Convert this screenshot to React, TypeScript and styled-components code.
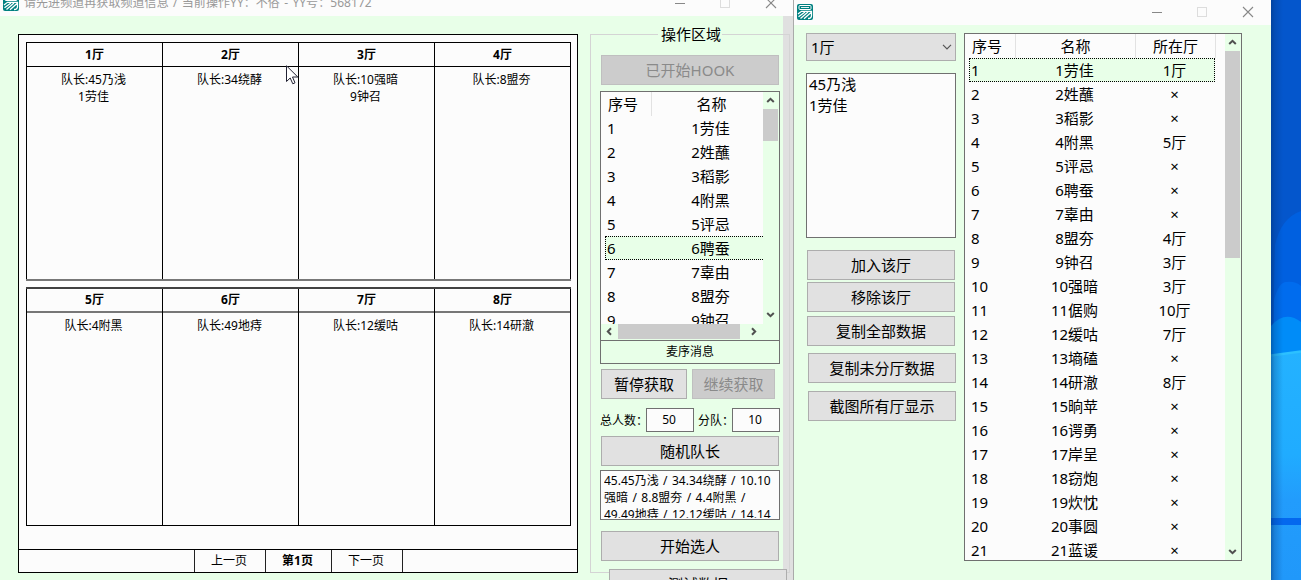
import React from 'react';
import styled, { createGlobalStyle, css } from 'styled-components';

const MINT = '#e8ffe8';
const PAPER = '#fcfcfc';

const GlobalStyle = createGlobalStyle`
  * { box-sizing: border-box; }
  body {
    margin: 0;
    overflow: hidden;
    font-family: "Noto Sans", "Noto Sans CJK SC", sans-serif;
    font-size: 15px;
    color: #000;
  }
  button, select, input { font: inherit; }
`;

const Desktop = styled.div`
  position: relative;
  display: flex;
  width: 1301px;
  height: 580px;
  overflow: hidden;
`;

const MainWindow = styled.section`
  display: flex;
  flex-direction: column;
  width: 793px;
  height: 580px;
  overflow: hidden;
  background: ${MINT};
`;

const SideWindow = styled.section`
  display: flex;
  flex-direction: column;
  width: 478px;
  height: 580px;
  background: ${MINT};
  border-left: 1px solid #aaa;
`;

const TitleBar = styled.header<{ $h: number; $shift: number; $pad: string }>`
  display: flex;
  flex: none;
  align-items: center;
  height: ${p => p.$h}px;
  padding: ${p => p.$pad};
  background: ${PAPER};
  & > * { margin-top: ${p => p.$shift}px; flex: none; }
`;

const TitleText = styled.span`
  flex: 1 0 auto;
  padding-left: 5px;
  font-size: 12px;
  line-height: 16px;
  letter-spacing: 0.06px;
  word-spacing: 1.1px;
  color: #999;
  white-space: nowrap;
`;

const Spacer = styled.span`
  flex: 1 1 auto !important;
`;

const MainBody = styled.div`
  display: flex;
  flex: 1;
  padding: 18px 0 0 18px;
  background: linear-gradient(to right, transparent 783px, #e0e0e0 783px);
`;

const Board = styled.div`
  display: flex;
  flex-direction: column;
  width: 560px;
  height: 539px;
  border: 1px solid #000;
  background: ${PAPER};
`;

const HallGroup = styled.div<{ $lower?: boolean }>`
  display: grid;
  grid-template-columns: 137px 136px 136px 136px;
  width: 545px;
  height: 239px;
  margin: ${p => (p.$lower ? 6 : 7)}px 0 0 7px;
  border-top: ${p => (p.$lower ? '2px solid #404040' : '1px solid #000')};
  border-bottom: ${p => (p.$lower ? '1px solid #000' : '2px solid #777')};
`;

const Hall = styled.div`
  border-right: 1px solid #000;
  text-align: center;
  font-size: 12px;
  line-height: 17px;
  &:first-child { border-left: 1px solid #000; }
`;

const HallName = styled.div<{ $lower?: boolean }>`
  height: 24px;
  line-height: ${p => (p.$lower ? 22 : 23)}px;
  margin-bottom: 4px;
  font-weight: 700;
  border-bottom: ${p => (p.$lower ? '2px solid #777' : '1px solid #000')};
`;

const Member = styled.div`
  padding-right: 2px;
`;

const Pager = styled.div`
  display: flex;
  height: 24px;
  margin-top: auto;
  margin-bottom: -1px;
  padding-left: 175px;
  padding-bottom: 1px;
  border-top: 1px solid #000;
  font-size: 12px;
  line-height: 22px;
  text-align: center;
`;

const PageCell = styled.div<{ $w: number; $bold?: boolean }>`
  width: ${p => p.$w}px;
  padding-right: 2px;
  border-left: 1px solid #222;
  font-weight: ${p => (p.$bold ? 700 : 400)};
  &:last-child { border-right: 1px solid #222; }
`;

const ControlGroup = styled.fieldset`
  display: flex;
  flex-direction: column;
  width: 200px;
  height: 539px;
  margin: 0 0 0 12px;
  padding: 0 0 0 9px;
  border: 1px solid #d4d4d4;
  min-width: 0;
`;

const Legend = styled.div`
  align-self: flex-start;
  width: 64px;
  height: 20px;
  margin: -11px 0 10px 58px;
  padding-left: 3px;
  line-height: 20px;
  white-space: nowrap;
  background: ${MINT};
`;

const Button = styled.button<{ $w: number; $top?: number; $left?: number }>`
  flex: none;
  width: ${p => p.$w}px;
  height: 30px;
  margin: ${p => p.$top ?? 0}px 0 0 ${p => p.$left ?? 0}px;
  padding: 0;
  border: 1px solid #adadad;
  background: #e1e1e1;
  color: #000;
  line-height: 28px;
  &:disabled {
    border-color: #bfbfbf;
    background: #ccc;
    color: #8a8a8a;
  }
`;

const ListFrame = styled.div<{ $w: number; $h: number; $top?: number }>`
  flex: none;
  display: flex;
  flex-direction: column;
  width: ${p => p.$w}px;
  height: ${p => p.$h}px;
  margin-top: ${p => p.$top ?? 0}px;
  border: 1px solid #707070;
  background: ${MINT};
`;

const ListArea = styled.div<{ $h: number }>`
  display: flex;
  height: ${p => p.$h}px;
  overflow: hidden;
`;

const Rows = styled.div`
  flex: 1;
  overflow: hidden;
  background: ${PAPER};
`;

const rowGrid = css<{ $cols: string }>`
  display: grid;
  grid-template-columns: ${p => p.$cols};
  height: 24px;
  line-height: 24px;
  white-space: nowrap;
`;

const HeaderRow = styled.div<{ $cols: string }>`
  ${rowGrid}
  & > span { border-right: 1px solid #e2e2e2; text-align: center; }
  & > span:first-child { text-align: left; padding-left: 7px; }
`;

const Row = styled.div<{ $cols: string; $selected?: boolean; $open?: boolean }>`
  ${rowGrid}
  position: relative;
  & > span { text-align: center; padding-right: 3px; }
  & > span:first-child { text-align: left; padding-left: 6px; }
  ${p => p.$selected && css`
    &::before {
      content: '';
      position: absolute;
      inset: 0 ${p.$open ? 0 : 10}px 0 4px;
      border: 1px dotted #000;
      ${p.$open && 'border-right: 0;'}
      background: ${MINT};
    }
    & > span { position: relative; }
  `}
`;

const ScrollY = styled.div`
  display: flex;
  flex-direction: column;
  align-items: center;
  width: 15px;
  margin-right: 1px;
  background: ${MINT};
`;

const ScrollX = styled.div`
  display: flex;
  align-items: flex-start;
  height: 16px;
`;

const ThumbY = styled.div<{ $h: number }>`
  width: 15px;
  height: ${p => p.$h}px;
  margin-bottom: auto;
  background: #cbcbcb;
`;

const ThumbX = styled.div`
  width: 122px;
  height: 15px;
  background: #cbcbcb;
`;

const ArrowBox = styled.span<{ $w: number; $h: number }>`
  display: flex;
  align-items: center;
  justify-content: center;
  width: ${p => p.$w}px;
  height: ${p => p.$h}px;
`;

const Caption = styled.div`
  flex: 1;
  border-top: 1px solid #707070;
  font-size: 12px;
  line-height: 22px;
  text-align: center;
`;

const Line = styled.div<{ $top: number; $gap?: number }>`
  display: flex;
  align-items: center;
  flex: none;
  margin-top: ${p => p.$top}px;
  gap: ${p => p.$gap ?? 0}px;
`;

const Label = styled.label<{ $w: number }>`
  width: ${p => p.$w}px;
  font-size: 12px;
  white-space: nowrap;
`;

const NumberBox = styled.div<{ $w: number; $right?: number }>`
  width: ${p => p.$w}px;
  height: 24px;
  margin-right: ${p => p.$right ?? 0}px;
  padding-right: 2px;
  border: 1px solid #707070;
  background: ${PAPER};
  font-size: 12px;
  line-height: 22px;
  text-align: center;
`;

const CaptainBox = styled.div`
  flex: none;
  width: 180px;
  height: 50px;
  margin-top: 4px;
  padding: 1px 3px;
  border: 1px solid #707070;
  background: ${PAPER};
  font-size: 12px;
  line-height: 17px;
  word-spacing: 1.3px;
  white-space: pre;
`;

const CaptainText = styled.div`
  height: 46px;
  overflow: hidden;
`;

const SideBody = styled.div`
  display: flex;
  gap: 8px;
  padding: 8px 0 0 12px;
`;

const SideColumn = styled.div`
  display: flex;
  flex-direction: column;
  width: 150px;
`;

const Combo = styled.div`
  display: flex;
  align-items: center;
  justify-content: space-between;
  height: 28px;
  padding: 0 3px 1px 4px;
  border: 1px solid #adadad;
  background: #e1e1e1;
`;

const MemberBox = styled.div`
  height: 165px;
  margin: 12px 0;
  padding: 0 2px;
  border: 1px solid #707070;
  background: ${PAPER};
  line-height: 21px;
`;

const Wallpaper = styled.svg`
  display: block;
  width: 30px;
  height: 580px;
`;

const Pointer = styled.svg`
  position: absolute;
  left: 286px;
  top: 65px;
`;

const Chevron = ({ dir }: { dir: 'up' | 'down' | 'left' | 'right' }) => {
  const turn = { up: 0, right: 90, down: 180, left: 270 }[dir];
  return (
    <svg width="9" height="9" viewBox="0 0 9 9">
      <path d="M1.2 6 L4.5 2.8 L7.8 6" fill="none" stroke="#505050" strokeWidth="2" transform={`rotate(${turn} 4.5 4.5)`} />
    </svg>
  );
};

const Logo = () => (
  <svg width="16" height="16" viewBox="0 0 16 16">
    <rect width="16" height="16" rx="2" fill="#008080" />
    <rect x="2" y="1.500" width="12" height="4" rx="1" fill="none" stroke="#fff" />
    <path d="M4 3.500H12" stroke="#fff" strokeWidth=".9" />
    <path d="M1 10L4.500 7.300H14.500V11.500Q14.500 14.500 11 14.500M8 8L1.500 12.800M11 8L3.500 14.500M14 8.500L7 14.800" fill="none" stroke="#fff" strokeWidth="1.3" />
  </svg>
);

const Controls = () => (
  <svg width="102" height="12" viewBox="0 0 102 12" fill="none">
    <path d="M0 6.5H10" stroke="#888" />
    <rect x="45.5" y="1.5" width="9" height="9" stroke="#ddd" />
    <path d="M91 1L101 11M101 1L91 11" stroke="#888" strokeWidth="1.1" />
  </svg>
);

const halls = [
  [['1厅', '队长:45乃浅', '1劳佳'], ['2厅', '队长:34绕酵'], ['3厅', '队长:10强暗', '9钟召'], ['4厅', '队长:8盟夯']],
  [['5厅', '队长:4附黑'], ['6厅', '队长:49地痔'], ['7厅', '队长:12缓咕'], ['8厅', '队长:14研澈']],
];

const people: [string, string][] = [
  ['劳佳', '1厅'], ['姓蘸', '×'], ['稻影', '×'], ['附黑', '5厅'], ['评忌', '×'], ['聘蚕', '×'], ['辜由', '×'],
  ['盟夯', '4厅'], ['钟召', '3厅'], ['强暗', '3厅'], ['倨购', '10厅'], ['缓咕', '7厅'], ['墒磕', '×'], ['研澈', '8厅'],
  ['晌苹', '×'], ['谔勇', '×'], ['岸呈', '×'], ['窃炮', '×'], ['炊忱', '×'], ['事圆', '×'], ['蓝谖', '×'],
];

const SMALL = '51px 120px';
const WIDE = '51px 120px 80px 10px';

export default function App() {
  return (
    <>
      <GlobalStyle />
      <Desktop>
        <MainWindow>
          <TitleBar $h={16} $shift={-10} $pad="0 16px 0 3px">
            <Logo />
            <TitleText>请先进频道再获取频道信息 / 当前操作YY：不俗 - YY号：568172</TitleText>
            <Controls />
          </TitleBar>
          <MainBody>
            <Board>
              {halls.map((group, g) => (
                <HallGroup key={g} $lower={g === 1}>
                  {group.map(([name, ...members]) => (
                    <Hall key={name}>
                      <HallName $lower={g === 1}>{name}</HallName>
                      {members.map(m => <Member key={m}>{m}</Member>)}
                    </Hall>
                  ))}
                </HallGroup>
              ))}
              <Pager>
                <PageCell $w={71}>上一页</PageCell>
                <PageCell $w={66} $bold>第1页</PageCell>
                <PageCell $w={72}>下一页</PageCell>
              </Pager>
            </Board>
            <ControlGroup>
              <Legend>操作区域</Legend>
              <Button $w={178} $left={1} $top={1} disabled>已开始HOOK</Button>
              <ListFrame $w={180} $h={273} $top={6}>
                <ListArea $h={232}>
                  <Rows>
                    <HeaderRow $cols={SMALL}><span>序号</span><span>名称</span></HeaderRow>
                    {people.slice(0, 9).map(([name], i) => (
                      <Row key={name} $cols={SMALL} $selected={i === 5} $open>
                        <span>{i + 1}</span><span>{i + 1}{name}</span>
                      </Row>
                    ))}
                  </Rows>
                  <ScrollY>
                    <ArrowBox $w={15} $h={17}><Chevron dir="up" /></ArrowBox>
                    <ThumbY $h={32} />
                    <ArrowBox $w={15} $h={19}><Chevron dir="down" /></ArrowBox>
                  </ScrollY>
                </ListArea>
                <ScrollX>
                  <ArrowBox $w={17} $h={15}><Chevron dir="left" /></ArrowBox>
                  <ThumbX />
                  <ArrowBox $w={27} $h={15}><Chevron dir="right" /></ArrowBox>
                </ScrollX>
                <Caption>麦序消息</Caption>
              </ListFrame>
              <Line $top={5} $gap={5}>
                <Button $w={86} $left={1}>暂停获取</Button>
                <Button $w={83} disabled>继续获取</Button>
              </Line>
              <Line $top={9}>
                <Label $w={46}>总人数：</Label>
                <NumberBox $w={48} $right={4}>50</NumberBox>
                <Label $w={34}>分队：</Label>
                <NumberBox $w={48}>10</NumberBox>
              </Line>
              <Button $w={178} $left={1} $top={4}>随机队长</Button>
              <CaptainBox>
                <CaptainText>{'45.45乃浅 / 34.34绕酵 / 10.10\n强暗 / 8.8盟夯 / 4.4附黑 /\n49.49地痔 / 12.12缓咕 / 14.14'}</CaptainText>
              </CaptainBox>
              <Button $w={178} $left={1} $top={11}>开始选人</Button>
              <Button $w={178} $left={9} $top={8}>测试数据</Button>
            </ControlGroup>
          </MainBody>
        </MainWindow>
        <SideWindow>
          <TitleBar $h={25} $shift={-1} $pad="0 17px 0 3px">
            <Logo />
            <Spacer />
            <Controls />
          </TitleBar>
          <SideBody>
            <SideColumn>
              <Combo>
                1厅
                <svg width="10" height="6" viewBox="0 0 10 6"><path d="M1 .8L5 4.8L9 .8" fill="none" stroke="#555" strokeWidth="1.2" /></svg>
              </Combo>
              <MemberBox>
                <div>45乃浅</div>
                <div>1劳佳</div>
              </MemberBox>
              <Button $w={148} $left={1}>加入该厅</Button>
              <Button $w={148} $left={1} $top={2}>移除该厅</Button>
              <Button $w={148} $left={1} $top={4}>复制全部数据</Button>
              <Button $w={148} $left={2} $top={7}>复制未分厅数据</Button>
              <Button $w={148} $left={2} $top={8}>截图所有厅显示</Button>
            </SideColumn>
            <ListFrame $w={278} $h={528}>
              <ListArea $h={526}>
                <Rows>
                  <HeaderRow $cols={WIDE}><span>序号</span><span>名称</span><span>所在厅</span></HeaderRow>
                  {people.map(([name, hall], i) => (
                    <Row key={name} $cols={WIDE} $selected={i === 0}>
                      <span>{i + 1}</span><span>{i + 1}{name}</span><span>{hall}</span>
                    </Row>
                  ))}
                </Rows>
                <ScrollY>
                  <ArrowBox $w={15} $h={17}><Chevron dir="up" /></ArrowBox>
                  <ThumbY $h={207} />
                  <ArrowBox $w={15} $h={17}><Chevron dir="down" /></ArrowBox>
                </ScrollY>
              </ListArea>
            </ListFrame>
          </SideBody>
        </SideWindow>
        <Wallpaper viewBox="0 0 30 580" preserveAspectRatio="none">
          <defs>
            <linearGradient id="pane" x1="0" y1="0" x2="0" y2="1">
              <stop offset="0" stopColor="#24b2ff" />
              <stop offset=".45" stopColor="#20acff" />
              <stop offset=".65" stopColor="#229cfc" />
              <stop offset="1" stopColor="#2098fa" />
            </linearGradient>
            <linearGradient id="shade" x1="0" y1="0" x2="1" y2="0">
              <stop offset="0" stopColor="#003070" stopOpacity=".5" />
              <stop offset=".12" stopColor="#003070" stopOpacity=".25" />
              <stop offset=".4" stopColor="#003070" stopOpacity="0" />
            </linearGradient>
          </defs>
          <rect width="30" height="580" fill="#0456cc" />
          <path d="M4 245Q10 218 30 211V330H2Z" fill="#0060e0" />
          <path d="M3 300Q8 281 16 282Q24 281 30 286V340H3Z" fill="#006cee" />
          <path d="M0 326Q14 310 30 322V360H0Z" fill="#008cf8" />
          <path d="M0 355L30 351V580H0Z" fill="url(#pane)" />
          <path d="M0 355.500L30 351.500" stroke="#2cc0ff" strokeWidth="2.500" />
          <rect y="518" width="30" height="7" fill="#0468ee" />
          <rect width="30" height="580" fill="url(#shade)" />
        </Wallpaper>
        <Pointer width="13" height="20" viewBox="0 0 13 20">
          <path d="M.5 .8V16.500L4.200 13L6.800 18.800L9 17.800L6.500 12H11.800Z" fill="#fff" stroke="#223" strokeWidth="1" />
        </Pointer>
      </Desktop>
    </>
  );
}
